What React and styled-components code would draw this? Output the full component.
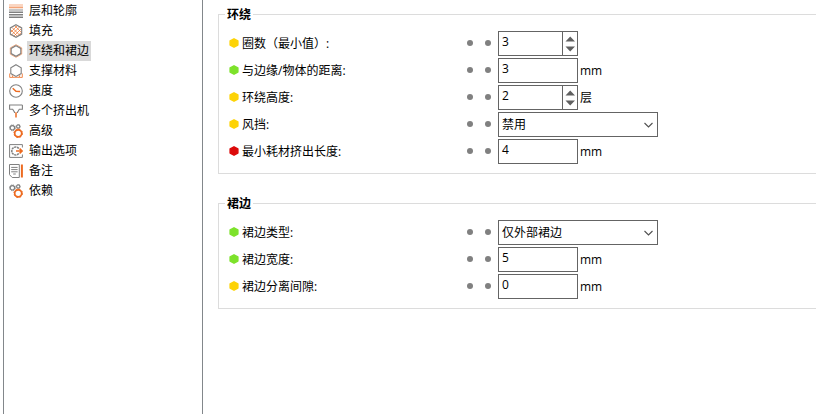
import React from "react";
import styled, { createGlobalStyle } from "styled-components";

const GlobalStyle = createGlobalStyle`
  * { box-sizing: border-box; }
  body { margin: 0; background: #fff; overflow: hidden; }
`;

const Window = styled.div`
  display: flex;
  width: 816px;
  height: 414px;
  padding-left: 3px;
  overflow: hidden;
  background: #fff;
  color: #000;
  font: 12px/20px "Open Sans", "Noto Sans CJK SC", sans-serif;
  white-space: nowrap;
`;

const Sidebar = styled.nav`
  flex: none;
  width: 200px;
  padding: 1px 0 0 5px;
  border-left: 1px solid #82878b;
  border-right: 1px solid #82878b;
`;

const NavItem = styled.div`
  display: flex;
  align-items: center;
  height: 20px;
  gap: 4px;
  svg { flex: none; display: block; }
`;

const NavLabel = styled.span`
  height: 20px;
  line-height: 20px;
  padding: 0 2px;
  background: ${(p) => (p.$selected ? "#d9d9d9" : "transparent")};
`;

const Content = styled.main`
  flex: none;
  width: 640px;
  padding: 5px 0 0 15px;
`;

const Group = styled.fieldset`
  margin: 0 0 20px;
  padding: 6px 0 8px 10px;
  border: 1px solid #dcdcdc;
`;

const GroupTitle = styled.legend`
  height: 19px;
  margin-left: -4px;
  padding: 0 2px;
  line-height: 19px;
  font-weight: 700;
`;

const Row = styled.div`
  display: flex;
  align-items: center;
  height: 27px;
`;

const Label = styled.span`
  width: 228px;
  padding-left: 3px;
  line-height: 26px;
`;

const Dots = styled.span`
  display: flex;
  gap: 12px;
  width: 31px;
  padding-bottom: 1px;
`;

const Dot = styled.i`
  width: 6px;
  height: 6px;
  border-radius: 50%;
  background: #808080;
`;

const Field = styled.div`
  display: flex;
  justify-content: space-between;
  width: ${(p) => (p.$wide ? 160 : 80)}px;
  height: 25px;
  border: 1px solid #646464;
  padding-left: 3px;
  line-height: ${(p) => (p.$wide ? 24 : 19)}px;
`;

const Spinner = styled.span`
  display: flex;
  width: 15px;
  height: 23px;
  border-left: 1px solid #646464;
`;

const Arrow = styled.span`
  display: flex;
  align-items: center;
  padding-right: 4px;
`;

const Unit = styled.span`
  padding-left: 2px;
  line-height: 24px;
`;

const BulletSvg = styled.svg`
  flex: none;
  display: block;
  margin-bottom: 1px;
`;

const G = "#808080";
const O = "#ed6b21";

const Gears = () => (
  <g fill="none">
    <circle cx="3.4" cy="3.8" r="2.2" stroke={G} strokeWidth="1.2" />
    <circle cx="3.4" cy="3.8" r="2.9" stroke={G} strokeWidth="1" strokeDasharray="1.2 1.08" />
    <circle cx="9.2" cy="2.5" r="1.6" stroke={G} strokeWidth="1.1" />
    <circle cx="9.2" cy="2.5" r="2.2" stroke={G} strokeWidth=".7" strokeDasharray="1 .73" />
    <circle cx="9.2" cy="9.3" r="3.5" stroke={O} strokeWidth="1.7" />
    <circle cx="9.2" cy="9.3" r="4.3" stroke={O} strokeWidth="1" strokeDasharray="1.7 1.68" />
  </g>
);

const icons = {
  layers: (
    <g>
      <path d="M0 1h14" stroke={O} strokeWidth="1.2" opacity=".45" />
      <path d="M0 3.4h14" stroke={O} strokeWidth="1.8" opacity=".6" />
      <path d="M0 6h14" stroke={G} strokeWidth="1.2" opacity=".75" />
      <path d="M0 8.2h14M0 10.7h14M0 13.2h14" stroke={G} strokeWidth="1.6" />
    </g>
  ),
  infill: (
    <g fill="none">
      <path d="M2 8l6-6M2 11.5L11 2.5M4.5 12.5L12 5M8 12.5l4.5-4M6 2l6.5 6.5M3 3.5l8 8M1.5 5.5l6.8 6.8" stroke={O} strokeWidth=".8" opacity=".85" />
      <path d="M7 .7l5.7 3.2v6.2L7 13.3l-5.7-3.2V3.9z" stroke={G} strokeWidth="1.1" />
    </g>
  ),
  skirt: (
    <g fill="none">
      <path d="M7 .7l5.7 3.2v6.2L7 13.3l-5.7-3.2V3.9z" stroke={O} strokeWidth="1" opacity=".6" />
      <path d="M7 1.7l4.8 2.7v5.2L7 12.3 2.2 9.6V4.4z" stroke={G} strokeWidth="1.1" />
    </g>
  ),
  support: (
    <g fill="none">
      <path d="M.7 9.5v3.9h3.1l-.6-2.2M10.8 11.2l-.6 2.2h3.1V9.5M4 13.3h6" stroke={O} strokeWidth="1" opacity=".8" />
      <path d="M7 .7l5.2 3v5.9L7 12.4 1.8 9.6V3.7z" stroke={G} strokeWidth="1.1" />
    </g>
  ),
  speed: (
    <g fill="none">
      <circle cx="7" cy="7" r="6.3" stroke={G} strokeWidth="1.1" />
      <path d="M3.7 4.2L7 7.2l4.1.2" stroke={O} strokeWidth="1.5" />
    </g>
  ),
  extruder: (
    <g fill="none">
      <path d="M13.4 1H.6v4.3h3.1l1.8 2.9v.8M8.5 9v-.8l1.8-2.9h3.1V1" stroke={G} strokeWidth="1.1" />
      <path d="M7 8.3v5.2" stroke={O} strokeWidth="1.5" />
    </g>
  ),
  gears: <Gears />,
  output: (
    <g fill="none">
      <path d="M13.4 3.5V.6H.6v12.8h12.8v-2.9" stroke={G} strokeWidth="1" />
      <path d="M9.8 4.4a4 4 0 1 0 0 5.2" stroke={G} strokeWidth="1.5" strokeDasharray="2.2 .6" />
      <path d="M7 7h5.6M10.6 4.7L13 7l-2.4 2.3" stroke={O} strokeWidth="1.6" />
    </g>
  ),
  notes: (
    <g fill="none">
      <path d="M.5.5h9.8v13H3.2L.5 10.7z" stroke={G} strokeWidth="1" />
      <path d="M2.2 3.4h6.4M2.2 5.6h6.4M2.2 7.8h6.4M4.2 10h2.6" stroke={G} strokeWidth="1" />
      <path d="M12.9.5v13" stroke={O} strokeWidth="2" />
    </g>
  ),
};

const pages = [
  ["layers", "层和轮廓"],
  ["infill", "填充"],
  ["skirt", "环绕和裙边", true],
  ["support", "支撑材料"],
  ["speed", "速度"],
  ["extruder", "多个挤出机"],
  ["gears", "高级"],
  ["output", "输出选项"],
  ["notes", "备注"],
  ["gears", "依赖"],
];

const YELLOW = "#fdd306";
const GREEN = "#7de22b";
const RED = "#dc0a0a";

const groups = [
  {
    title: "环绕",
    rows: [
      { color: YELLOW, label: "圈数（最小值）:", value: "3", kind: "spin" },
      { color: GREEN, label: "与边缘/物体的距离:", value: "3", unit: "mm" },
      { color: YELLOW, label: "环绕高度:", value: "2", kind: "spin", unit: "层" },
      { color: YELLOW, label: "风挡:", value: "禁用", kind: "select" },
      { color: RED, label: "最小耗材挤出长度:", value: "4", unit: "mm" },
    ],
  },
  {
    title: "裙边",
    rows: [
      { color: GREEN, label: "裙边类型:", value: "仅外部裙边", kind: "select" },
      { color: GREEN, label: "裙边宽度:", value: "5", unit: "mm" },
      { color: YELLOW, label: "裙边分离间隙:", value: "0", unit: "mm" },
    ],
  },
];

const Option = ({ color, label, value, kind, unit }) => (
  <Row>
    <BulletSvg width="10" height="10" viewBox="0 0 10 10">
      <path d="M5 .8l3.9 2.1v4.2L5 9.2 1.1 7.1V2.9z" fill={color} stroke={color} strokeWidth="1.4" strokeLinejoin="round" />
    </BulletSvg>
    <Label>{label}</Label>
    <Dots>
      <Dot />
      <Dot />
    </Dots>
    <Field $wide={kind === "select"}>
      <span>{value}</span>
      {kind === "spin" && (
        <Spinner>
          <svg width="14" height="23" viewBox="0 0 14 23">
            <path d="M2.5 9.5L7.2 4.5l4.8 5zM2.5 14.5l4.7 5 4.8-5z" fill="#606060" />
          </svg>
        </Spinner>
      )}
      {kind === "select" && (
        <Arrow>
          <svg width="9" height="6" viewBox="0 0 9 6">
            <path d="M.5 1l4 4 4-4" fill="none" stroke="#505050" strokeWidth="1.1" />
          </svg>
        </Arrow>
      )}
    </Field>
    {unit && <Unit>{unit}</Unit>}
  </Row>
);

export default function App() {
  return (
    <>
      <GlobalStyle />
      <Window>
        <Sidebar>
          {pages.map(([icon, name, selected]) => (
            <NavItem key={name}>
              <svg width="14" height="14" viewBox="0 0 14 14">{icons[icon]}</svg>
              <NavLabel $selected={selected}>{name}</NavLabel>
            </NavItem>
          ))}
        </Sidebar>
        <Content>
          {groups.map((g) => (
            <Group key={g.title}>
              <GroupTitle>{g.title}</GroupTitle>
              {g.rows.map((r) => (
                <Option key={r.label} {...r} />
              ))}
            </Group>
          ))}
        </Content>
      </Window>
    </>
  );
}
